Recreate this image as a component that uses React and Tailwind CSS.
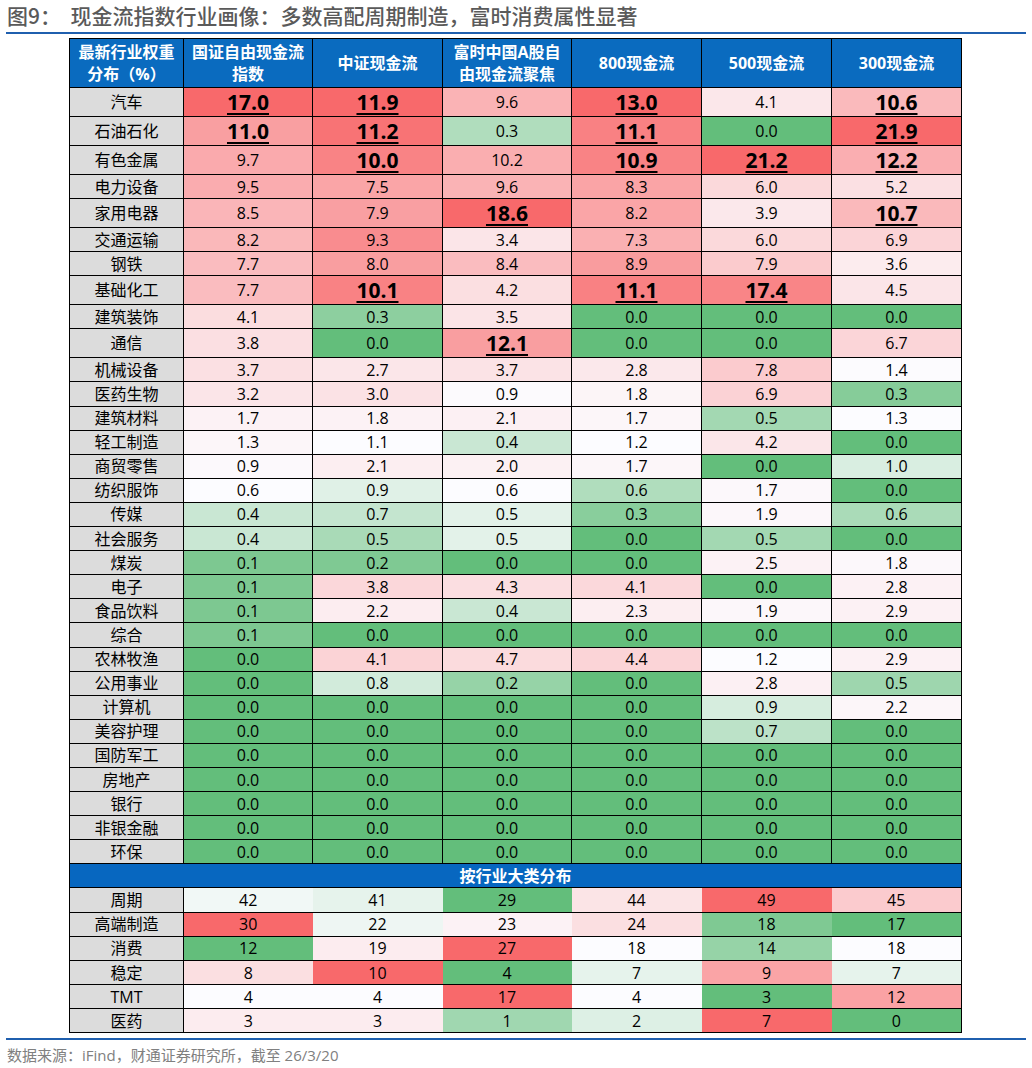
import React from "react";

const GREEN = [99, 190, 123];
const WHITE = [252, 252, 255];
const RED = [248, 105, 107];

const headers = [
  ["最新行业权重", "分布（%）"],
  ["国证自由现金流", "指数"],
  ["中证现金流"],
  ["富时中国A股自", "由现金流聚焦"],
  ["800现金流"],
  ["500现金流"],
  ["300现金流"],
];

// "*" marks the bold underlined cells
const industryRows = [
  ["汽车", "17.0*", "11.9*", "9.6", "13.0*", "4.1", "10.6*"],
  ["石油石化", "11.0*", "11.2*", "0.3", "11.1*", "0.0", "21.9*"],
  ["有色金属", "9.7", "10.0*", "10.2", "10.9*", "21.2*", "12.2*"],
  ["电力设备", "9.5", "7.5", "9.6", "8.3", "6.0", "5.2"],
  ["家用电器", "8.5", "7.9", "18.6*", "8.2", "3.9", "10.7*"],
  ["交通运输", "8.2", "9.3", "3.4", "7.3", "6.0", "6.9"],
  ["钢铁", "7.7", "8.0", "8.4", "8.9", "7.9", "3.6"],
  ["基础化工", "7.7", "10.1*", "4.2", "11.1*", "17.4*", "4.5"],
  ["建筑装饰", "4.1", "0.3", "3.5", "0.0", "0.0", "0.0"],
  ["通信", "3.8", "0.0", "12.1*", "0.0", "0.0", "6.7"],
  ["机械设备", "3.7", "2.7", "3.7", "2.8", "7.8", "1.4"],
  ["医药生物", "3.2", "3.0", "0.9", "1.8", "6.9", "0.3"],
  ["建筑材料", "1.7", "1.8", "2.1", "1.7", "0.5", "1.3"],
  ["轻工制造", "1.3", "1.1", "0.4", "1.2", "4.2", "0.0"],
  ["商贸零售", "0.9", "2.1", "2.0", "1.7", "0.0", "1.0"],
  ["纺织服饰", "0.6", "0.9", "0.6", "0.6", "1.7", "0.0"],
  ["传媒", "0.4", "0.7", "0.5", "0.3", "1.9", "0.6"],
  ["社会服务", "0.4", "0.5", "0.5", "0.0", "0.5", "0.0"],
  ["煤炭", "0.1", "0.2", "0.0", "0.0", "2.5", "1.8"],
  ["电子", "0.1", "3.8", "4.3", "4.1", "0.0", "2.8"],
  ["食品饮料", "0.1", "2.2", "0.4", "2.3", "1.9", "2.9"],
  ["综合", "0.1", "0.0", "0.0", "0.0", "0.0", "0.0"],
  ["农林牧渔", "0.0", "4.1", "4.7", "4.4", "1.2", "2.9"],
  ["公用事业", "0.0", "0.8", "0.2", "0.0", "2.8", "0.5"],
  ["计算机", "0.0", "0.0", "0.0", "0.0", "0.9", "2.2"],
  ["美容护理", "0.0", "0.0", "0.0", "0.0", "0.7", "0.0"],
  ["国防军工", "0.0", "0.0", "0.0", "0.0", "0.0", "0.0"],
  ["房地产", "0.0", "0.0", "0.0", "0.0", "0.0", "0.0"],
  ["银行", "0.0", "0.0", "0.0", "0.0", "0.0", "0.0"],
  ["非银金融", "0.0", "0.0", "0.0", "0.0", "0.0", "0.0"],
  ["环保", "0.0", "0.0", "0.0", "0.0", "0.0", "0.0"],
];

const groupRows = [
  ["周期", 42, 41, 29, 44, 49, 45],
  ["高端制造", 30, 22, 23, 24, 18, 17],
  ["消费", 12, 19, 27, 18, 14, 18],
  ["稳定", 8, 10, 4, 7, 9, 7],
  ["TMT", 4, 4, 17, 4, 3, 12],
  ["医药", 3, 3, 1, 2, 7, 0],
];

const colWidths = [114, 129, 130, 129, 130, 130, 130];

const median = (arr) => {
  const s = [...arr].sort((a, b) => a - b);
  const n = s.length;
  return n % 2 ? s[(n - 1) / 2] : (s[n / 2 - 1] + s[n / 2]) / 2;
};

const mix = (a, b, t) => a.map((v, i) => Math.round(v + (b[i] - v) * t));

// Excel-style 3 colour scale: min green, median white, max red
const scaleColor = (v, values) => {
  const min = Math.min(...values);
  const max = Math.max(...values);
  const mid = median(values);
  const c =
    v <= mid
      ? mix(GREEN, WHITE, mid === min ? 1 : (v - min) / (mid - min))
      : mix(WHITE, RED, (v - mid) / (max - mid));
  return `rgb(${c.join(",")})`;
};

// industry part is scaled per column, group part per row
const columnValues = [1, 2, 3, 4, 5, 6].map((j) =>
  industryRows.map((r) => parseFloat(r[j]))
);

const App = () => {
  return (
    <div className="w-[1032px] h-[1068px] bg-white font-['Open_Sans','Noto_Sans_CJK_SC',sans-serif] text-black">
      {/* Title */}
      <div className="h-[32px] pl-[7px] flex items-center text-[21px] font-medium text-[#5a5a5a] font-['Noto_Sans_CJK_SC',sans-serif] whitespace-pre">
        图9：  现金流指数行业画像：多数高配周期制造，富时消费属性显著
      </div>
      <div className="mx-[6px] h-[2px] bg-[#1f5fae]" />

      {/* Table */}
      <div className="ml-[69px] mt-[4px]">
        <table className="border-collapse table-fixed w-[892px]">
          <colgroup>
            {colWidths.map((w, i) => (
              <col key={i} style={{ width: w }} />
            ))}
          </colgroup>
          <thead>
            <tr className="h-[49px]">
              {headers.map((lines, i) => (
                <th
                  key={i}
                  className="border border-black bg-[#0a6bbf] text-white font-bold text-[16px] leading-[22px] p-0 text-center"
                >
                  {lines.map((l) => (
                    <div key={l}>{l}</div>
                  ))}
                </th>
              ))}
            </tr>
          </thead>
          <tbody>
            {industryRows.map((row) => {
              const hasBold = row.some((c) => c.endsWith("*"));
              return (
                <tr key={row[0]} className={hasBold ? "h-[29px]" : "h-[24.1px]"}>
                  <td className="border border-black bg-[#dcdcdc] text-center text-[16px] leading-none p-0">
                    {row[0]}
                  </td>
                  {row.slice(1).map((cell, j) => {
                    const bold = cell.endsWith("*");
                    const text = cell.replace("*", "");
                    return (
                      <td
                        key={j}
                        className="border border-black text-center text-[16px] leading-none p-0"
                        style={{ backgroundColor: scaleColor(parseFloat(text), columnValues[j]) }}
                      >
                        {bold ? (
                          <span className="text-[21px] font-bold underline decoration-[1.5px] underline-offset-[3px]">
                            {text}
                          </span>
                        ) : (
                          text
                        )}
                      </td>
                    );
                  })}
                </tr>
              );
            })}

            <tr className="h-[24px]">
              <td
                colSpan={7}
                className="border border-black bg-[#0767c0] text-white font-bold text-[16px] leading-none text-center p-0"
              >
                按行业大类分布
              </td>
            </tr>

            {groupRows.map((row) => {
              const values = row.slice(1);
              return (
                <tr key={row[0]} className="h-[24.2px]">
                  <td className="border border-black bg-[#dcdcdc] text-center text-[16px] leading-none p-0">
                    {row[0]}
                  </td>
                  {values.map((v, j) => (
                    <td
                      key={j}
                      className={
                        j === values.length - 1
                          ? "border-y border-r border-black text-center text-[16px] leading-none p-0"
                          : "border-y border-black text-center text-[16px] leading-none p-0"
                      }
                      style={{ backgroundColor: scaleColor(v, values) }}
                    >
                      {v}
                    </td>
                  ))}
                </tr>
              );
            })}
          </tbody>
        </table>
      </div>

      {/* Footer */}
      <div className="mx-[6px] mt-[5px] h-[2px] bg-[#1f5fae]" />
      <div className="pl-[7px] mt-[4px] text-[15px] text-[#808080]">
        数据来源：iFind，财通证券研究所，截至 26/3/20
      </div>
    </div>
  );
};

export default App;
